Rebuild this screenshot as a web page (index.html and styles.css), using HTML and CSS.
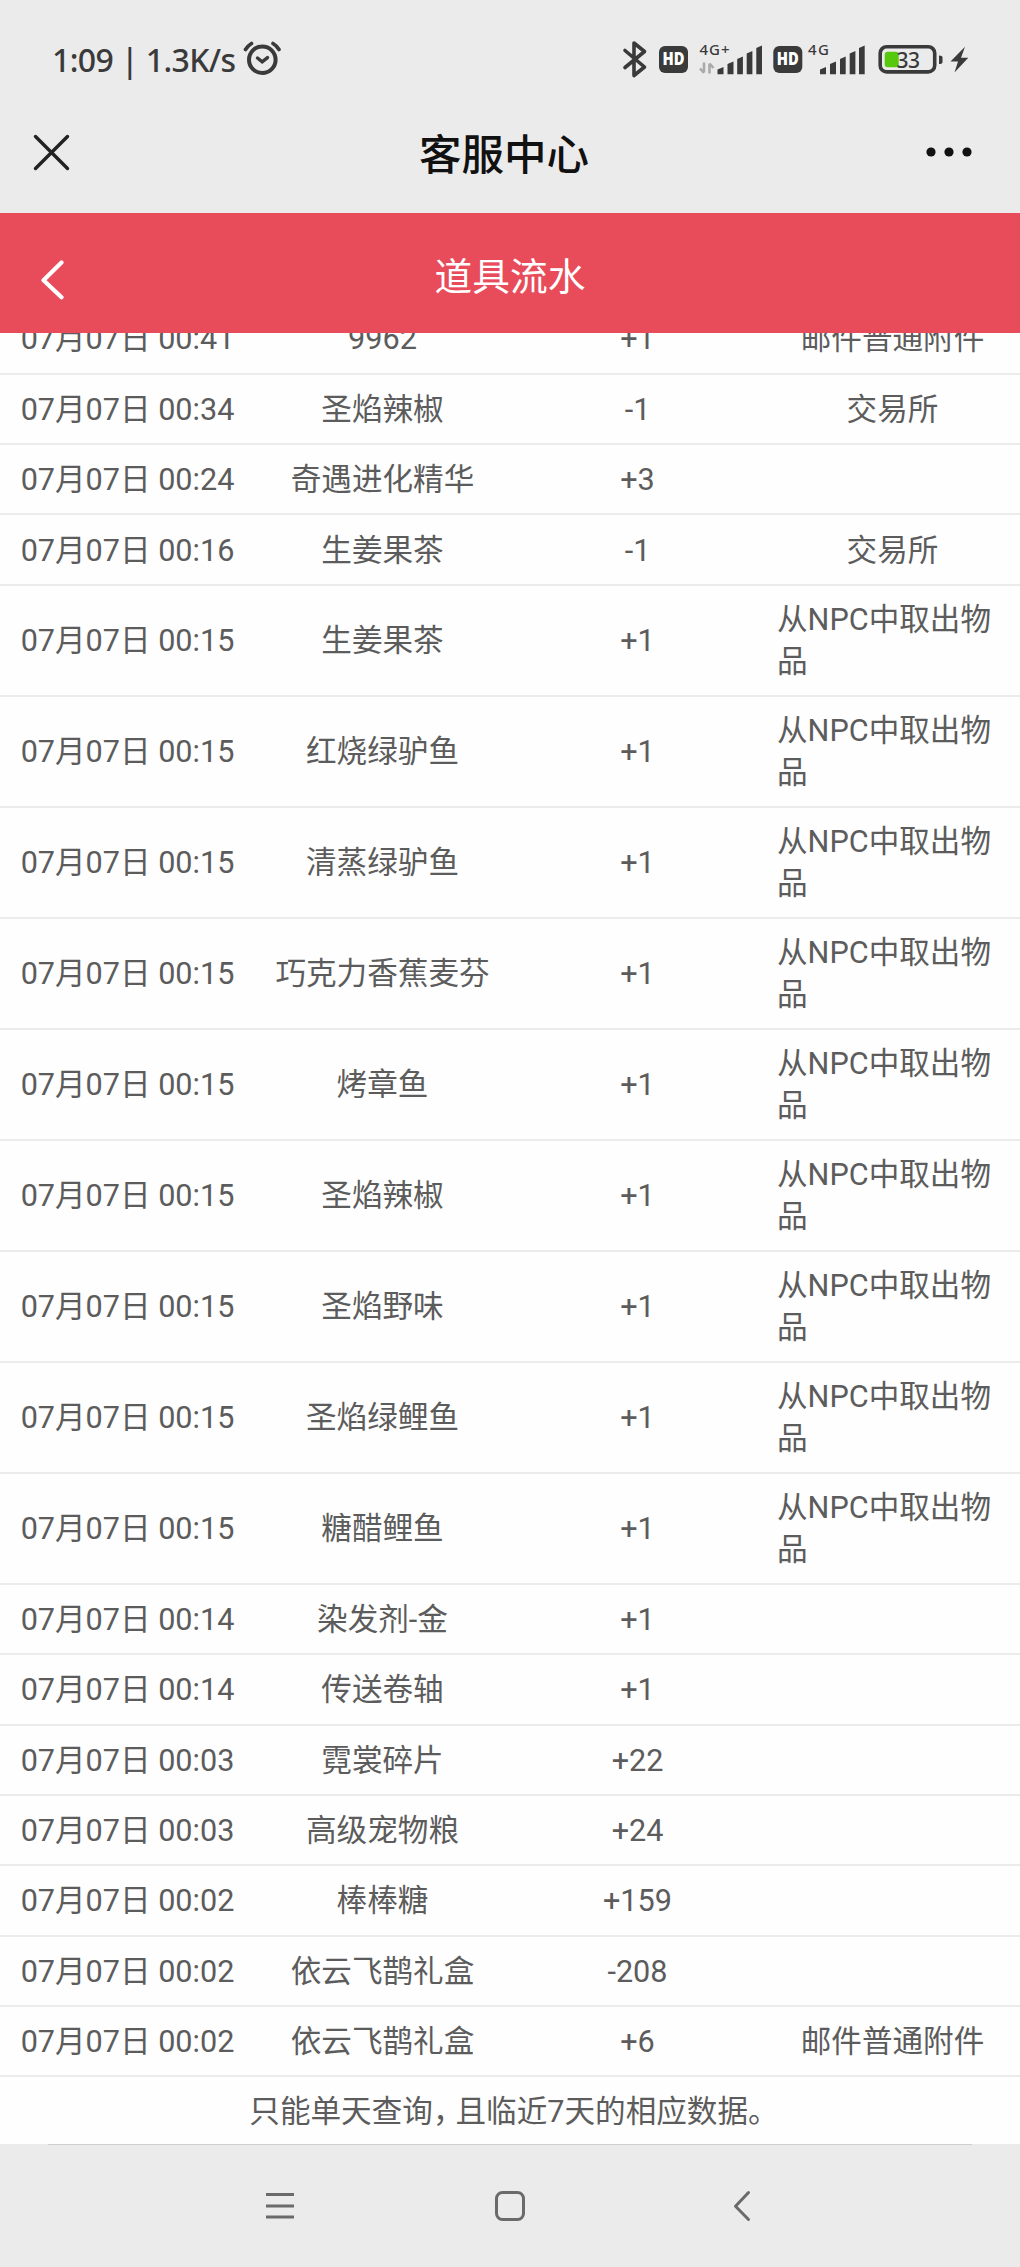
FILE: index.html
```html
<!DOCTYPE html>
<html lang="zh-CN">
<head>
    <meta charset="UTF-8">
    <meta name="viewport" content="width=device-width, initial-scale=1.0">
    <title>客服中心</title>
    <link rel="stylesheet" href="styles.css">
</head>
<body>
    <div class="status-bar">
        <div class="status-left">
            <span class="clock">1:09 | 1.3K/s</span>
            <svg class="alarm" width="38" height="38" viewBox="243 41 38 38" fill="none" stroke="#3a3a3a" stroke-width="4" stroke-linecap="round">
                <circle cx="262.3" cy="60.7" r="13.3"/>
                <path d="M257.5 59l4.7 3.8 5.3-4.2" stroke-width="3.4"/>
                <path d="M245.5 50.5q2-3.5 6-6M279 50.5q-2-3.5-6-6" stroke-width="3.6"/>
            </svg>
        </div>
        <svg class="status-icons" width="350" height="40" viewBox="620 40 350 40" fill="#3a3a3a">
            <!-- bluetooth -->
            <path d="M625 50.5l19.500 16.500L634 75.500V43l10.500 8.500L625 67.500" fill="none" stroke="#3a3a3a" stroke-width="3.6" stroke-linecap="round" stroke-linejoin="round"/>
            <!-- sim 1 -->
            <rect x="659" y="46" width="29" height="27" rx="6"/>
            <text class="hd" x="673.5" y="65" textLength="22" lengthAdjust="spacingAndGlyphs">HD</text>
            <text class="net" x="699.5" y="54.7" textLength="30">4G+</text>
            <path d="M704 62.500v10M704 73l-4-4.500M709.500 73.500v-10M709.500 63.500l4 4.500" fill="none" stroke="#aaa" stroke-width="2.6"/>
            <path d="M717.500 69.500l6-2.500v7.300h-6zM727.500 64l6-2.500v12.800h-6zM737.200 59l5.700-2.500v17.800h-5.700zM746.700 53.500l5.700-2.500v23.300h-5.700zM756.300 48l5.700-2.500v28.800h-5.700z"/>
            <!-- sim 2 -->
            <rect x="773.3" y="46" width="29" height="27" rx="6"/>
            <text class="hd" x="787.8" y="65" textLength="22" lengthAdjust="spacingAndGlyphs">HD</text>
            <text class="net" x="808" y="54.7" textLength="21">4G</text>
            <path d="M820 69.500l6-2.500v7.300h-6zM830 64l6-2.500v12.800h-6zM840 59l5.700-2.500v17.800h-5.700zM849.700 53.500l5.700-2.500v23.300h-5.700zM859 48l5.700-2.500v28.800h-5.700z"/>
            <!-- battery -->
            <rect x="880.2" y="46.7" width="54.5" height="25.2" rx="6.5" fill="none" stroke="#3a3a3a" stroke-width="3.6"/>
            <rect x="884.7" y="51.7" width="14" height="15.6" rx="3" fill="#58c80f"/>
            <text class="charge" x="896.5" y="67.6" textLength="23.5">33</text>
            <path d="M939 55.500q3.500 0 3.500 2v4.500q0 2-3.500 2z"/>
            <path d="M965 46.700l-14.500 14.800h7.500l-3.500 11 13.800-14.800h-7.300z"/>
        </svg>
    </div>

    <div class="app-bar">
        <svg width="40" height="40" viewBox="0 0 40 40" fill="none" stroke="#222" stroke-width="3.4" stroke-linecap="round">
            <path d="M4.500 4.500l32 32M36.500 4.500l-32 32"/>
        </svg>
        <h1 class="app-title">客服中心</h1>
        <svg width="46" height="10" viewBox="0 0 46 10" fill="#111">
            <circle cx="5" cy="5" r="4.6"/>
            <circle cx="23" cy="5" r="4.6"/>
            <circle cx="41" cy="5" r="4.6"/>
        </svg>
    </div>

    <div class="page-head">
        <svg class="back" width="26" height="40" viewBox="0 0 26 40" fill="none" stroke="#fff" stroke-width="4.2" stroke-linecap="round" stroke-linejoin="round">
            <path d="M21.500 2.500L3.500 20.300l18 17"/>
        </svg>
        <h2 class="page-title">道具流水</h2>
    </div>

    <!-- record list, scrolled to the end -->
    <div class="list-view">
        <div class="list">
            <div class="row"><span>07月07日 00:41</span><span>9962</span><span>+1</span><span>邮件普通附件</span></div>
            <div class="row"><span>07月07日 00:34</span><span>圣焰辣椒</span><span>-1</span><span>交易所</span></div>
            <div class="row"><span>07月07日 00:24</span><span>奇遇进化精华</span><span>+3</span><span></span></div>
            <div class="row"><span>07月07日 00:16</span><span>生姜果茶</span><span>-1</span><span>交易所</span></div>
            <div class="row"><span>07月07日 00:15</span><span>生姜果茶</span><span>+1</span><span class="long">从NPC中取出物品</span></div>
            <div class="row"><span>07月07日 00:15</span><span>红烧绿驴鱼</span><span>+1</span><span class="long">从NPC中取出物品</span></div>
            <div class="row"><span>07月07日 00:15</span><span>清蒸绿驴鱼</span><span>+1</span><span class="long">从NPC中取出物品</span></div>
            <div class="row"><span>07月07日 00:15</span><span>巧克力香蕉麦芬</span><span>+1</span><span class="long">从NPC中取出物品</span></div>
            <div class="row"><span>07月07日 00:15</span><span>烤章鱼</span><span>+1</span><span class="long">从NPC中取出物品</span></div>
            <div class="row"><span>07月07日 00:15</span><span>圣焰辣椒</span><span>+1</span><span class="long">从NPC中取出物品</span></div>
            <div class="row"><span>07月07日 00:15</span><span>圣焰野味</span><span>+1</span><span class="long">从NPC中取出物品</span></div>
            <div class="row"><span>07月07日 00:15</span><span>圣焰绿鲤鱼</span><span>+1</span><span class="long">从NPC中取出物品</span></div>
            <div class="row"><span>07月07日 00:15</span><span>糖醋鲤鱼</span><span>+1</span><span class="long">从NPC中取出物品</span></div>
            <div class="row"><span>07月07日 00:14</span><span>染发剂-金</span><span>+1</span><span></span></div>
            <div class="row"><span>07月07日 00:14</span><span>传送卷轴</span><span>+1</span><span></span></div>
            <div class="row"><span>07月07日 00:03</span><span>霓裳碎片</span><span>+22</span><span></span></div>
            <div class="row"><span>07月07日 00:03</span><span>高级宠物粮</span><span>+24</span><span></span></div>
            <div class="row"><span>07月07日 00:02</span><span>棒棒糖</span><span>+159</span><span></span></div>
            <div class="row"><span>07月07日 00:02</span><span>依云飞鹊礼盒</span><span>-208</span><span></span></div>
            <div class="row"><span>07月07日 00:02</span><span>依云飞鹊礼盒</span><span>+6</span><span>邮件普通附件</span></div>
        </div>
        <p class="note">只能单天查询<span class="punct">，</span>且临近7天的相应数据<span class="punct">。</span></p>
    </div>

    <div class="nav-bar">
        <div class="nav-line"></div>
        <div class="nav-keys">
            <svg width="34" height="36" viewBox="0 0 34 36" fill="none" stroke="#6a6a6a" stroke-width="3">
                <path d="M3 6.500h28M3 18h28M3 29h28"/>
            </svg>
            <svg width="36" height="36" viewBox="0 0 36 36" fill="none" stroke="#6a6a6a" stroke-width="3">
                <rect x="4.5" y="4.5" width="27" height="27" rx="6"/>
            </svg>
            <svg width="24" height="36" viewBox="0 0 24 36" fill="none" stroke="#6a6a6a" stroke-width="3" stroke-linecap="round" stroke-linejoin="round">
                <path d="M18.500 4.500L5.500 18.200l13 13.300"/>
            </svg>
        </div>
    </div>
</body>
</html>
```
FILE: styles.css
```css
body {
    margin: 0;
    width: 1020px;
    height: 2267px;
    overflow: hidden;
    display: flex;
    flex-direction: column;
    background-color: #ebebeb;
    color: #5c5c5c;
    font-family: Roboto, "Noto Sans CJK SC", sans-serif;
}

h1, h2, p {
    margin: 0;
}

svg {
    display: block;
    flex: none;
}

/* phone status bar */
.status-bar {
    height: 80px;
    flex: none;
    padding: 40px 50px 0 52px;
    box-sizing: border-box;
    display: flex;
    justify-content: space-between;
}

.status-left {
    display: flex;
}

.clock {
    width: 191px;
    font-family: "Noto Sans", sans-serif;
    font-size: 32px;
    font-weight: 500;
    line-height: 39px;
    letter-spacing: -0.6px;
    white-space: nowrap;
    color: #3a3a3a;
}

.hd {
    font: 800 17px "Open Sans", sans-serif;
    fill: #fff;
    text-anchor: middle;
}

.net {
    font: 500 15px "Noto Sans", sans-serif;
}

.charge {
    font: 500 21px "Noto Sans", sans-serif;
}

/* app title bar */
.app-bar {
    height: 133px;
    flex: none;
    padding: 11px 48px 0 31px;
    box-sizing: border-box;
    display: grid;
    grid-template-columns: 1fr auto 1fr;
    align-items: center;
}

.app-bar svg {
    margin-bottom: 1px;
}

.app-bar svg:last-child {
    justify-self: end;
}

.app-title {
    margin-left: 5px;
    padding-top: 7px;
    font-size: 42.5px;
    font-weight: 500;
    line-height: 60px;
    color: #111;
}

/* red page header */
.page-head {
    height: 120px;
    flex: none;
    padding: 7px 40px 0;
    box-sizing: border-box;
    display: grid;
    grid-template-columns: 1fr auto 1fr;
    align-items: center;
    background-color: #e84c5a;
    color: #fff;
}

.back {
    margin-top: 7px;
}

.page-title {
    font-size: 37.7px;
    font-weight: 400;
    line-height: 54px;
}

/* list */
.list-view {
    height: 1811px;
    flex: none;
    overflow: hidden;
    background-color: #fefefe;
    font-size: 30.6px;
    line-height: 41.5px;
}

.list {
    margin-top: -28.7px;
}

.row {
    display: grid;
    grid-template-columns: repeat(4, 1fr);
    align-items: center;
    min-height: 70.4px;
    padding: 13.6px 0 12.4px;
    box-sizing: border-box;
    border-bottom: 2px solid #ebebeb;
    text-align: center;
}

.row span {
    padding: 0 12px;
}

.row .long {
    text-align: left;
}

.note {
    line-height: 70px;
    text-align: center;
}

/* narrow punctuation */
.punct {
    letter-spacing: -8px;
}

/* navigation keys */
.nav-bar {
    flex: 1;
}

.nav-line {
    height: 1px;
    margin: 0 48px;
    background-color: #cfcfcf;
}

.nav-keys {
    display: flex;
    padding: 43px 0 0 263px;
}

.nav-keys svg:nth-child(2) {
    margin-left: 195px;
}

.nav-keys svg:nth-child(3) {
    margin-left: 202px;
}
```
